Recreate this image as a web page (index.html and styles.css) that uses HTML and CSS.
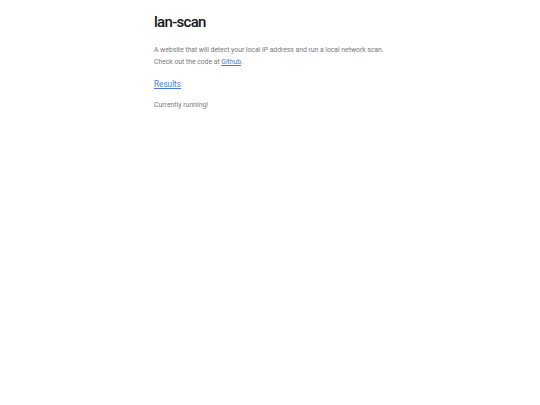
FILE: index.html
```html
<!DOCTYPE html>
<html lang="en">
<head>
<meta charset="utf-8">
<title>lan-scan</title>
<link rel="stylesheet" href="styles.css">
</head>
<body>
<main class="page">
  <h1 class="title">lan-scan</h1>
  <p class="intro">A website that will detect your local IP address and run a local network scan.<br>Check out the code at <a class="link" href="#">Github</a>.</p>
  <p class="results"><a class="link" href="#">Results</a></p>
  <p class="status">Currently running!</p>
</main>
</body>
</html>
```
FILE: styles.css
```css
html, body {
  margin: 0;
  padding: 0;
  background: #ffffff;
}
body {
  font-family: Roboto, "Liberation Sans", sans-serif;
}
.page {
  width: 240px;
  margin: 0 auto;
  padding: 12px 0 0 0;
  position: relative;
  left: 4px;
}
.title {
  margin: 0;
  font-size: 15px;
  font-weight: 500;
  color: #161616;
  line-height: 20px;
  letter-spacing: -0.7px;
}
.intro {
  margin: 12px 0 0 0;
  font-size: 6.9px;
  line-height: 12px;
  color: #7a7a7a;
  white-space: nowrap;
  letter-spacing: -0.05px;
}
.link {
  color: #4a7bd8;
  text-decoration: underline;
}
.results {
  margin: 10px 0 0 0;
  font-size: 8.2px;
  line-height: 12px;
}
.status {
  margin: 9px 0 0 0;
  font-size: 6.9px;
  line-height: 12px;
  color: #7a7a7a;
}
```
